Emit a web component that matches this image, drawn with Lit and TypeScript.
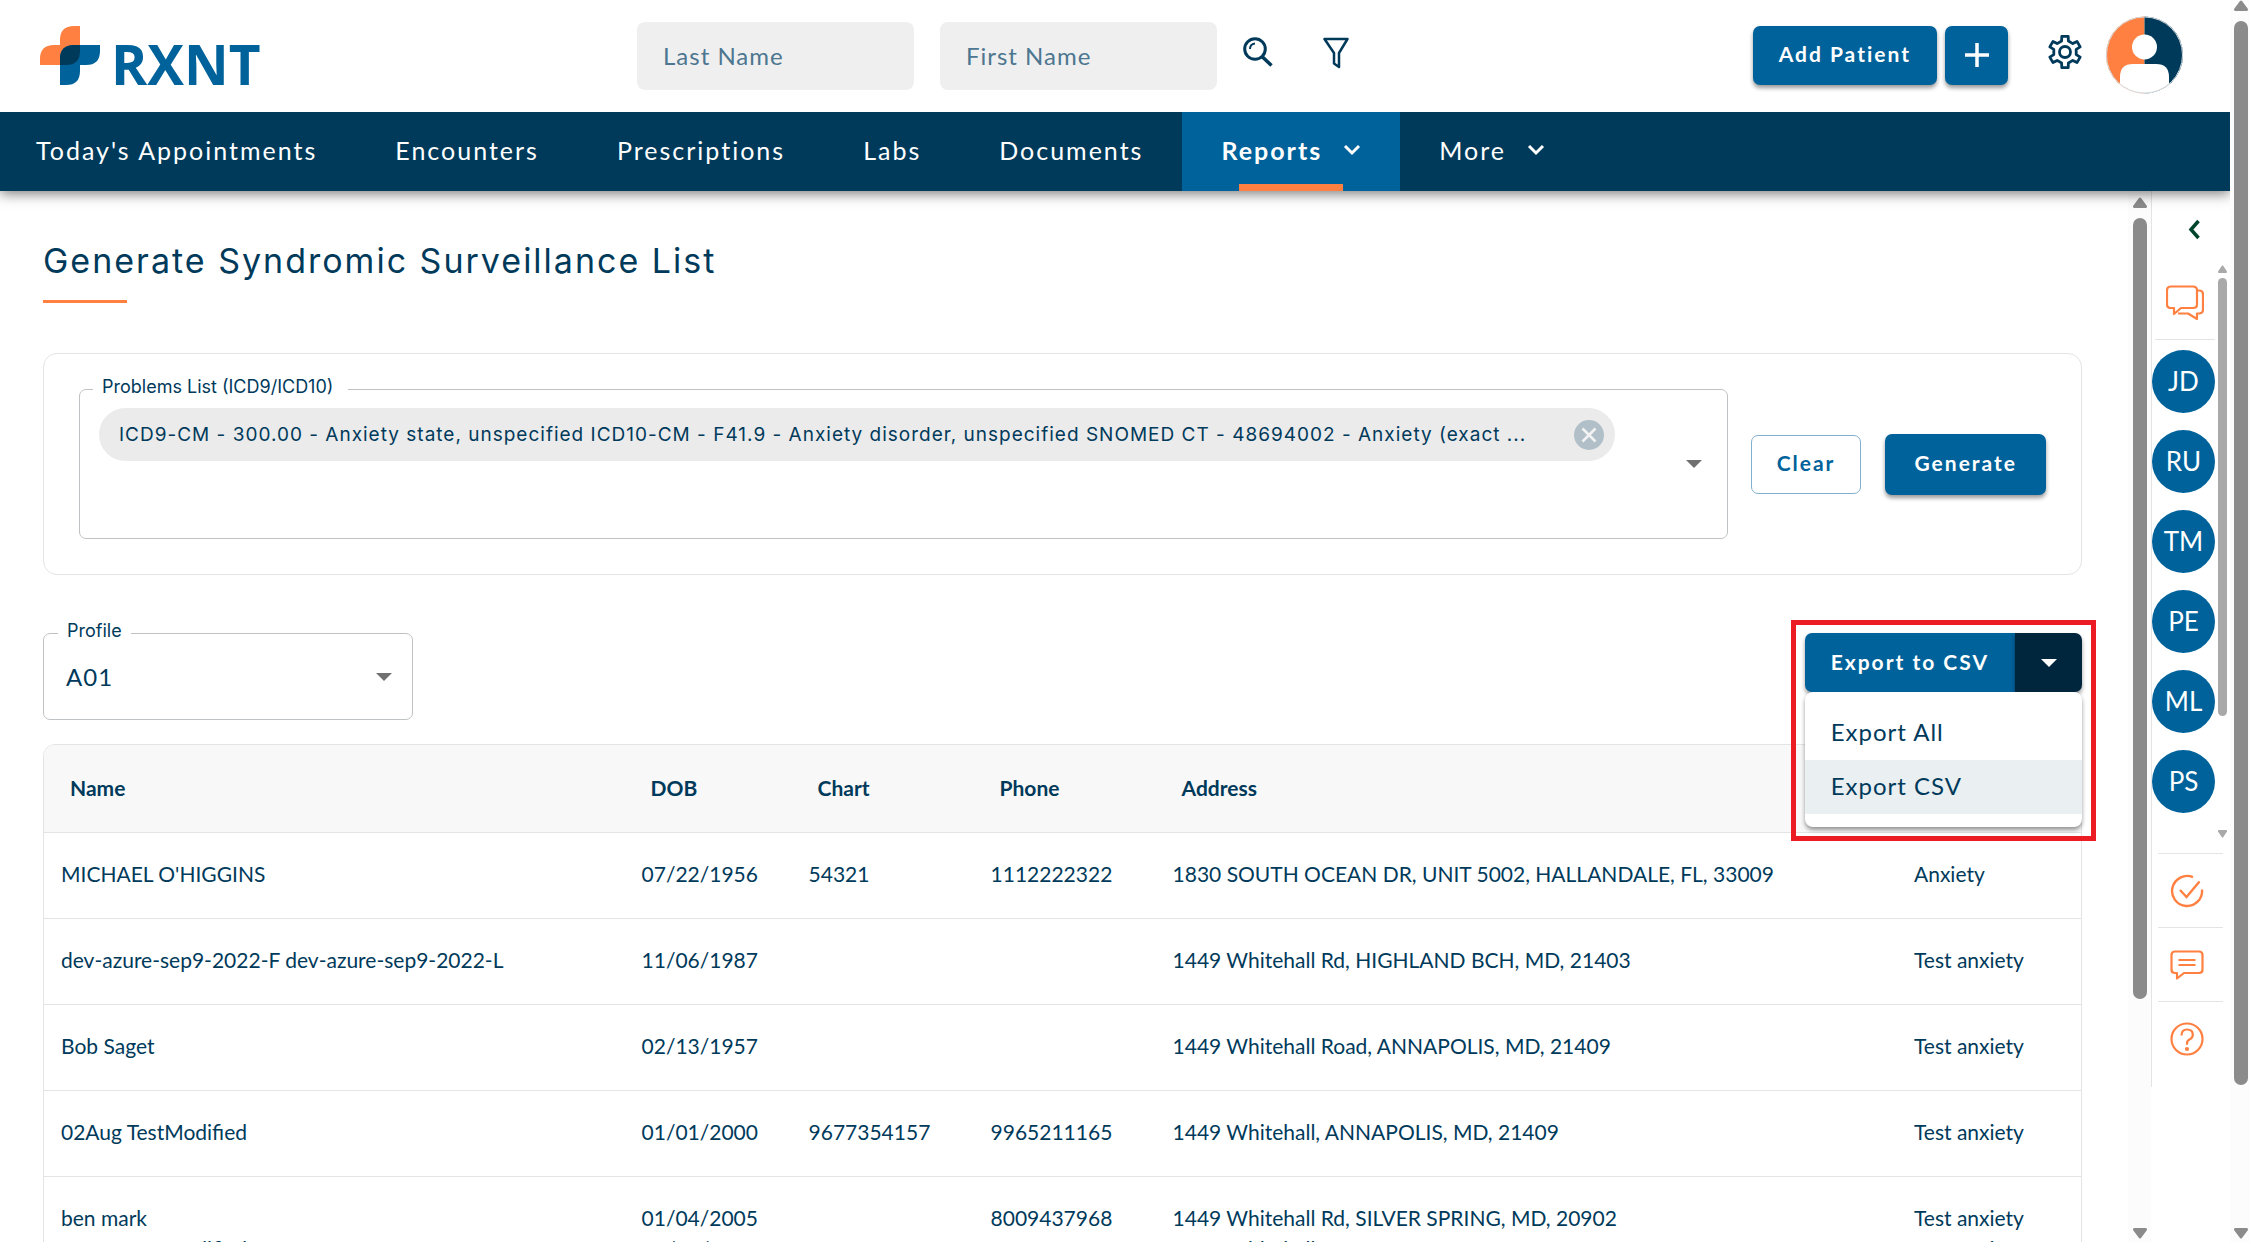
import { LitElement, html, css, svg } from "lit";
import { customElement, state } from "lit/decorators.js";

interface Patient {
  name: string;
  dob: string;
  chart: string;
  phone: string;
  address: string;
  problem: string;
}

const PATIENTS: Patient[] = [
  { name: "MICHAEL O'HIGGINS", dob: "07/22/1956", chart: "54321", phone: "1112222322", address: "1830 SOUTH OCEAN DR, UNIT 5002, HALLANDALE, FL, 33009", problem: "Anxiety" },
  { name: "dev-azure-sep9-2022-F dev-azure-sep9-2022-L", dob: "11/06/1987", chart: "", phone: "", address: "1449 Whitehall Rd, HIGHLAND BCH, MD, 21403", problem: "Test anxiety" },
  { name: "Bob Saget", dob: "02/13/1957", chart: "", phone: "", address: "1449 Whitehall Road, ANNAPOLIS, MD, 21409", problem: "Test anxiety" },
  { name: "02Aug TestModified", dob: "01/01/2000", chart: "9677354157", phone: "9965211165", address: "1449 Whitehall, ANNAPOLIS, MD, 21409", problem: "Test anxiety" },
];

const LAST_PATIENT: Patient = { name: "ben mark", dob: "01/04/2005", chart: "", phone: "8009437968", address: "1449 Whitehall Rd, SILVER SPRING, MD, 20902", problem: "Test anxiety" };

const caret = html`<svg class="caret" viewBox="0 0 16 8" width="16" height="8" aria-hidden="true"><path d="M0 0h16l-8 8z" fill="currentColor" /></svg>`;
const chevron = html`<svg width="18" height="12" viewBox="0 0 18 12" aria-hidden="true"><path d="M2 2l7 7 7-7" fill="none" stroke="currentColor" stroke-width="3" /></svg>`;

@customElement("scroll-rail")
class ScrollRail extends LitElement {
  static properties = { shown: { type: Number }, rest: { type: Number } };
  declare shown: number;
  declare rest: number;

  static styles = css`
    :host {
      display: flex;
      flex-direction: column;
      align-items: center;
      box-sizing: border-box;
      color: #8b8b8b;
    }
    svg {
      flex: none;
      width: 100%;
      height: var(--arrow, 11px);
    }
    .thumb {
      width: 100%;
      border-radius: 8px;
      background: currentColor;
      margin: var(--gap, 10px) 0;
    }
  `;

  render() {
    return html`
      <svg viewBox="0 0 14 11" preserveAspectRatio="none"><path d="M6 1q1-1 2 0l6 8q0 2-1 2H1q-1 0-1-2z" fill="currentColor" /></svg>
      <div class="thumb" style="flex:${this.shown} 1 0"></div>
      <div style="flex:${this.rest} 1 0"></div>
      <svg viewBox="0 0 14 11" preserveAspectRatio="none"><path d="M6 10q1 1 2 0l6-8q0-2-1-2H1q-1 0-1 2z" fill="currentColor" /></svg>
    `;
  }
}

@customElement("app-root")
class AppRoot extends LitElement {
  @state() private menuOpen = true;

  static styles = css`
    :host {
      display: block;
      --navy: #003a5b;
      --blue: #00629b;
      --orange: #ff8040;
      --line: #e3e4e5;
      --ui: Lato, "Open Sans", sans-serif;
      --alt: Inter, "Open Sans", sans-serif;
      font-family: var(--ui);
      font-size: 21px;
      color: var(--navy);
      background: #fff;
    }
    * {
      box-sizing: border-box;
    }
    button,
    input,
    select {
      font: inherit;
      color: inherit;
      margin: 0;
      cursor: pointer;
    }
    .icon-button {
      display: flex;
      padding: 0;
      border: 0;
      background: none;
    }
    .shell {
      display: flex;
      height: 100vh;
      overflow: hidden;
    }
    .page {
      flex: 1;
      min-width: 0;
      display: flex;
      flex-direction: column;
    }
    .page-rail {
      flex: none;
      width: 20px;
      padding: 0 2px 3px 4px;
      background: #fcfcfc;
    }

    /* top bar */
    .top {
      flex: none;
      display: flex;
      align-items: center;
      height: 112px;
      padding: 0 47px 0 40px;
    }
    .logo {
      flex: none;
      display: flex;
      overflow: visible;
    }
    .search {
      display: flex;
      align-items: center;
      margin-left: 379px;
      gap: 26px;
    }
    .search input {
      width: 277px;
      height: 68px;
      padding: 0 26px 2px;
      border: 0;
      border-radius: 8px;
      background: #efefef;
      font-size: 24px;
      letter-spacing: 1px;
    }
    .search input::placeholder {
      color: #4d7690;
      opacity: 1;
    }
    .search .filter {
      margin-left: 24px;
    }
    .actions {
      display: flex;
      align-items: center;
      margin-left: auto;
      padding-bottom: 2px;
    }
    .btn {
      display: flex;
      align-items: center;
      justify-content: center;
      height: 59px;
      padding: 0 26px 3px;
      border: 0;
      border-radius: 7px;
      background: var(--blue);
      color: #fff;
      font-size: 21px;
      font-weight: 700;
      letter-spacing: 2px;
      white-space: nowrap;
      box-shadow: 0 3px 4px rgba(0, 0, 0, 0.4);
    }
    .plus {
      width: 63px;
      padding: 0;
      margin: 0 39px 0 8px;
    }
    .profile {
      margin-left: 23px;
    }

    /* navigation */
    .nav {
      flex: none;
      display: flex;
      height: 79px;
      background: var(--navy);
      box-shadow: 0 3px 12px rgba(0, 0, 0, 0.5);
      clip-path: inset(0 0 -20px 0);
      position: relative;
    }
    .nav a {
      position: relative;
      display: flex;
      align-items: center;
      gap: 21px;
      padding: 0 39px 3px;
      color: #fff;
      font-size: 25px;
      letter-spacing: 2px;
      text-decoration: none;
      white-space: nowrap;
    }
    .nav a:first-child {
      padding-left: 36px;
    }
    .nav a.active {
      background: var(--blue);
      font-weight: 700;
    }
    .nav a.active::after {
      content: "";
      position: absolute;
      left: 57px;
      right: 57px;
      bottom: 0;
      height: 7px;
      background: var(--orange);
    }

    /* body */
    .body {
      flex: 1;
      min-height: 0;
      display: flex;
    }
    .content {
      flex: 1;
      min-width: 0;
      overflow: hidden;
      padding: 49px 46px 0 43px;
    }
    h1 {
      margin: 0;
      font-family: var(--alt);
      font-size: 34px;
      line-height: 42px;
      font-weight: 400;
      letter-spacing: 2px;
    }
    .rule {
      width: 84px;
      height: 3px;
      margin-top: 18px;
      background: var(--orange);
    }
    .panel {
      display: flex;
      align-items: center;
      margin-top: 50px;
      padding: 35px;
      border: 1px solid var(--line);
      border-radius: 14px;
    }
    fieldset {
      min-width: 0;
      margin: 0;
      border: 1px solid #bfc2c4;
      border-radius: 7px;
    }
    legend {
      padding: 0 9px 4px;
      font-family: var(--alt);
      font-size: 18px;
      line-height: 18px;
    }
    .problems {
      flex: 1;
      display: flex;
      height: 161px;
      margin-top: -11px;
      padding: 0 25px 0 19px;
    }
    .problems legend {
      margin-left: -6px;
      padding-right: 15px;
    }
    .problems-body {
      display: flex;
      flex: 1;
      min-width: 0;
    }
    .chip {
      flex: 1;
      min-width: 0;
      display: flex;
      align-items: center;
      height: 53px;
      margin: 8px 71px 0 0;
      padding: 0 11px 0 20px;
      border-radius: 27px;
      background: #ebebeb;
      font-family: var(--alt);
      font-size: 19px;
      letter-spacing: 1px;
    }
    .chip span {
      flex: 1;
      min-width: 0;
      overflow: hidden;
      text-overflow: ellipsis;
      white-space: nowrap;
      margin-right: 20px;
    }
    .drop {
      align-self: center;
      margin-bottom: 11px;
      color: #707070;
    }
    .clear {
      margin-left: 23px;
      padding: 0 25px 3px;
      background: #fff;
      border: 1px solid #7fb0cd;
      color: var(--blue);
      box-shadow: none;
    }
    .generate {
      height: 61px;
      margin-left: 24px;
      padding: 0 29px 3px;
    }
    .tools {
      display: flex;
      justify-content: space-between;
      margin-top: 47px;
    }
    .profile-field {
      width: 370px;
      height: 98px;
      padding: 0 20px 0 14px;
    }
    .profile-field div {
      display: flex;
      align-items: center;
      height: 65px;
    }
    .profile-field select {
      flex: 1;
      margin-right: -16px;
      padding: 0 0 0 8px;
      border: 0;
      background: none;
      appearance: none;
      font-size: 24px;
      letter-spacing: 1px;
    }
    .caret {
      flex: none;
      pointer-events: none;
    }
    .profile-field .caret {
      color: #707070;
    }
    .export {
      position: relative;
      display: flex;
      height: 59px;
      margin-top: 11px;
      z-index: 2;
    }
    .export .main {
      border-radius: 7px 0 0 7px;
    }
    .export .toggle {
      width: 67px;
      padding: 0;
      border-radius: 0 7px 7px 0;
      background: #00263d;
    }
    .menu {
      position: absolute;
      top: 100%;
      left: 0;
      right: 0;
      margin: 0;
      padding: 14px 0 13px;
      border-radius: 8px;
      background: #fff;
      box-shadow: 0 3px 4px rgba(0, 0, 0, 0.4);
      list-style: none;
    }
    .menu button {
      display: block;
      width: 100%;
      height: 54px;
      padding: 0 26px 3px;
      border: 0;
      background: none;
      text-align: left;
      font-size: 24px;
      letter-spacing: 1px;
    }
    .menu .on {
      background: #eaeff2;
    }
    .highlight {
      position: absolute;
      top: -13px;
      left: -14px;
      right: -14px;
      height: 221px;
      border: 5px solid #ec1c24;
      pointer-events: none;
    }
    .table-card {
      margin-top: 24px;
      border: 1px solid var(--line);
      border-radius: 12px 12px 0 0;
      overflow: hidden;
    }
    table {
      width: 100%;
      border-collapse: collapse;
      table-layout: fixed;
    }
    th,
    td {
      height: 86px;
      padding: 0 17px 3px;
      border-bottom: 1px solid var(--line);
      text-align: left;
      font-weight: 400;
      white-space: nowrap;
    }
    th {
      height: 87px;
      padding: 0 26px 2px;
      background: #f8f8f8;
      font-weight: 700;
    }
    .c-name {
      width: 28.5%;
    }
    .c-dob {
      width: 167px;
    }
    .c-num {
      width: 182px;
    }
    .c-problem {
      width: 184px;
    }
    .last td {
      height: 60px;
      padding: 22px 17px 0;
      border: 0;
    }
    .under td {
      height: 26px;
      padding: 0 17px;
      line-height: 26px;
      vertical-align: top;
      border: 0;
    }
    .body-rail {
      flex: none;
      width: 23px;
      padding: 6px 4px 3px 5px;
      background: #fcfcfc;
    }

    /* side bar */
    .side {
      flex: none;
      align-self: flex-start;
      display: flex;
      flex-direction: column;
      width: 79px;
      border-left: 1px solid var(--line);
      padding-bottom: 12px;
    }
    .collapse {
      margin: 28px 0 0 36px;
      align-self: flex-start;
    }
    .people {
      display: flex;
      margin: 25px 0 15px;
      height: 573px;
    }
    .people-list {
      display: flex;
      flex-direction: column;
      align-items: center;
      width: 63px;
      gap: 17px;
    }
    .chat {
      padding: 20px 0 18px;
      width: 60px;
      margin: 0 0 -7px 3px;
      justify-content: center;
      border-bottom: 1px solid var(--line);
    }
    .person {
      flex: none;
      width: 63px;
      height: 63px;
      padding: 0 0 1px;
      border: 0;
      border-radius: 50%;
      background: var(--blue);
      color: #fff;
      font-size: 26px;
    }
    .people-rail {
      width: 11px;
      margin-left: 3px;
      padding-right: 2px;
      color: #a9a9a9;
      --arrow: 8px;
      --gap: 5px;
    }
    .tool {
      height: 74px;
      align-items: center;
      justify-content: center;
      width: 65px;
      margin-left: 6px;
      padding-right: 7px;
      border-top: 1px solid var(--line);
    }
  `;

  private link(label: string, active = false, drop = false) {
    return html`<a href="#" class=${active ? "active" : ""}>${label}${drop ? chevron : ""}</a>`;
  }

  private cells(p: Patient) {
    return html`<td>${p.name}</td><td>${p.dob}</td><td>${p.chart}</td><td>${p.phone}</td><td>${p.address}</td><td>${p.problem}</td>`;
  }

  private gear() {
    const pts: string[] = [];
    for (let i = 0; i < 6; i++) {
      const a = (i * 60 - 90) * (Math.PI / 180);
      for (const [r, d] of [[11.5, -0.3], [16, -0.2], [16, 0.2], [11.5, 0.3]]) {
        pts.push(`${(18 + r * Math.cos(a + d)).toFixed(1)},${(18 + r * Math.sin(a + d)).toFixed(1)}`);
      }
    }
    return svg`<polygon points=${pts.join(" ")} /><circle cx="18" cy="18" r="5.5" />`;
  }

  render() {
    return html`
      <div class="shell">
        <div class="page">
          <header class="top">
            <svg class="logo" width="218" height="60" viewBox="0 0 218 60" role="img" aria-label="RXNT">
              <path d="M40 0v39H0v-6Q0 19 14 19h6V14Q20 0 34 0z" fill="#ff8040" />
              <path d="M20 59V33q0-14 14-14h26v6q0 14-14 14H40v6q0 14-14 14z" fill="#00629b" />
              <path d="M34 19h6v6q0 14-14 14h-6v-6q0-14 14-14z" fill="#003a5b" />
              <text x="71" y="59" font-family="Open Sans, sans-serif" font-weight="700" font-size="55" fill="#00629b">RXNT</text>
            </svg>
            <div class="search">
              <input type="text" placeholder="Last Name" aria-label="Last Name" />
              <input type="text" placeholder="First Name" aria-label="First Name" />
              <button class="icon-button" aria-label="Search">
                <svg width="30" height="38" viewBox="0 0 30 38" fill="none" stroke="#003a5b" stroke-width="3">
                  <circle cx="12" cy="12" r="10.3" /><path d="M19 19.500l9.500 9" stroke-width="3.500" /><path d="M7 12q0-5 5-5.500" stroke-width="2" />
                </svg>
              </button>
              <button class="icon-button filter" aria-label="Filter">
                <svg width="26" height="38" viewBox="0 0 26 38" fill="none" stroke="#003a5b" stroke-width="2.500" stroke-linejoin="round">
                  <path d="M1.500 2h23L16 16v14l-5-3.500V16z" />
                </svg>
              </button>
            </div>
            <div class="actions">
              <button class="btn">Add Patient</button>
              <button class="btn plus" aria-label="Add">
                <svg width="24" height="24" viewBox="0 0 24 24"><path d="M12 0v24M0 12h24" stroke="#fff" stroke-width="3.500" /></svg>
              </button>
              <button class="icon-button" aria-label="Settings">
                <svg width="36" height="42" viewBox="0 0 36 42" fill="none" stroke="#003a5b" stroke-width="2.800" stroke-linejoin="round">${this.gear()}</svg>
              </button>
              <button class="icon-button profile" aria-label="Account">
                <svg width="77" height="78" viewBox="0 0 77 78">
                  <defs><clipPath id="disc"><circle cx="38.500" cy="39" r="38.500" /></clipPath></defs>
                  <g clip-path="url(#disc)">
                    <path d="M0 0h38.500v78H0z" fill="#ff8040" /><path d="M38.500 0H77v78H38.500z" fill="#003a5b" />
                    <circle cx="38.500" cy="31" r="12.500" fill="#fff" />
                    <path d="M14 78V61q0-13 13-13h23q13 0 13 13v17z" fill="#fff" />
                  </g>
                  <circle cx="38.500" cy="39" r="38" fill="none" stroke="#d5d8da" stroke-width="1" />
                </svg>
              </button>
            </div>
          </header>
          <nav class="nav">
            ${this.link("Today's Appointments")}${this.link("Encounters")}${this.link("Prescriptions")}${this.link("Labs")}${this.link("Documents")}${this.link("Reports", true, true)}${this.link("More", false, true)}
          </nav>
          <div class="body">
            <main class="content">
              <h1>Generate Syndromic Surveillance List</h1>
              <div class="rule"></div>
              <section class="panel">
                <fieldset class="problems">
                  <legend>Problems List (ICD9/ICD10)</legend>
                  <div class="problems-body">
                    <div class="chip">
                      <span>ICD9-CM - 300.00 - Anxiety state, unspecified ICD10-CM - F41.9 - Anxiety disorder, unspecified SNOMED CT - 48694002 - Anxiety (exact ...</span>
                      <button class="icon-button" aria-label="Remove">
                        <svg width="30" height="30" viewBox="0 0 30 30"><circle cx="15" cy="15" r="15" fill="#b0bfc8" /><path d="M8.500 8.500l13 13M21.500 8.500l-13 13" stroke="#f2f2f2" stroke-width="2.600" /></svg>
                      </button>
                    </div>
                    <button class="icon-button drop" aria-label="Open problems list">${caret}</button>
                  </div>
                </fieldset>
                <button class="btn clear">Clear</button>
                <button class="btn generate">Generate</button>
              </section>
              <div class="tools">
                <fieldset class="profile-field">
                  <legend><label for="profile">Profile</label></legend>
                  <div>
                    <select id="profile"><option>A01</option></select>
                    ${caret}
                  </div>
                </fieldset>
                <div class="export">
                  <button class="btn main">Export to CSV</button>
                  <button class="btn toggle" aria-label="Export options" @click=${() => (this.menuOpen = !this.menuOpen)}>${caret}</button>
                  ${this.menuOpen ? html`<ul class="menu"><li><button>Export All</button></li><li><button class="on">Export CSV</button></li></ul>` : ""}
                  <div class="highlight"></div>
                </div>
              </div>
              <div class="table-card">
                <table>
                  <colgroup><col class="c-name" /><col class="c-dob" /><col class="c-num" /><col class="c-num" /><col /><col class="c-problem" /></colgroup>
                  <thead><tr><th>Name</th><th>DOB</th><th>Chart</th><th>Phone</th><th>Address</th><th></th></tr></thead>
                  <tbody>
                    ${PATIENTS.map((p) => html`<tr>${this.cells(p)}</tr>`)}
                    <tr class="last">${this.cells(LAST_PATIENT)}</tr>
                    <tr class="under">${this.cells(PATIENTS[3])}</tr>
                  </tbody>
                </table>
              </div>
            </main>
            <scroll-rail class="body-rail" .shown=${780} .rest=${219}></scroll-rail>
            <aside class="side">
              <button class="icon-button collapse" aria-label="Expand">
                <svg width="12" height="21" viewBox="0 0 12 21"><path d="M10.500 2L3 10.500l7.500 8.500" fill="none" stroke="#00452c" stroke-width="3.500" /></svg>
              </button>
              <div class="people">
                <div class="people-list">
                  <button class="icon-button chat" aria-label="Chat">
                    <svg width="38" height="36" viewBox="0 0 38 36" fill="none" stroke="#ff8040" stroke-width="2.200" stroke-linejoin="round">
                      <path d="M5 1.500h22q4 0 4 4v14q0 3.500-4 3.500H15l-7 6v-6H5q-4 0-4-3.500v-14q0-4 4-4z" />
                      <path d="M31 5.500h2q4 0 4 4v15q0 4-4 4h-2V34l-9-5.500H12" />
                    </svg>
                  </button>
                  ${["JD", "RU", "TM", "PE", "ML", "PS"].map((n) => html`<button class="person">${n}</button>`)}
                </div>
                <scroll-rail class="people-rail" .shown=${438} .rest=${109}></scroll-rail>
              </div>
              <button class="icon-button tool" aria-label="Tasks">
                <svg width="34" height="34" viewBox="0 0 34 34" fill="none" stroke="#ff8040" stroke-width="2.400">
                  <path d="M23 3.200A15 15 0 1 0 32 15.500M10 16l6.500 7L29.500 7.500" />
                </svg>
              </button>
              <button class="icon-button tool" aria-label="Messages">
                <svg width="34" height="30" viewBox="0 0 34 30" fill="none" stroke="#ff8040" stroke-width="2.200" stroke-linejoin="round">
                  <path d="M5 1.500h24q3.500 0 3.500 3.500v14.500q0 3.500-3.500 3.500H14l-7 5.500V23H5q-3.500 0-3.500-3.500V5q0-3.500 3.500-3.500zM8.500 10h17M8.500 15h17" />
                </svg>
              </button>
              <button class="icon-button tool" aria-label="Help">
                <svg width="34" height="34" viewBox="0 0 34 34" fill="none" stroke="#ff8040" stroke-width="2.200">
                  <circle cx="17" cy="17" r="15.500" /><path d="M11.500 13.500q0-6 5.500-6 5.800 0 5.800 5.200 0 3-3 4.500-2.800 1.300-2.800 4v1.500" /><circle cx="17" cy="27" r="1" fill="#ff8040" />
                </svg>
              </button>
            </aside>
          </div>
        </div>
        <scroll-rail class="page-rail" .shown=${1064} .rest=${133}></scroll-rail>
      </div>
    `;
  }
}
